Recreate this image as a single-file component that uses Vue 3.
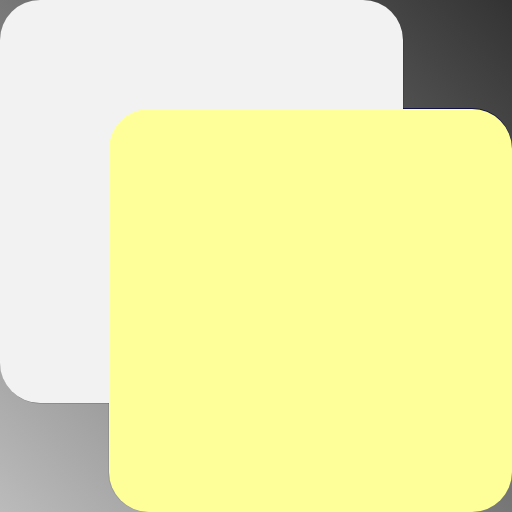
<template>
  <main class="page">
    <div class="note edge"></div>
    <div class="note back"></div>
    <div class="note front"></div>
  </main>
</template>

<script setup>
</script>

<style scoped>
.page {
  display: grid;
  width: 512px;
  height: 512px;
  overflow: hidden;
  background: linear-gradient(to top right, #bbbbbb 0%, #333333 100%);
}

.note {
  grid-area: 1 / 1;
  width: 403px;
  height: 403px;
  border-radius: 40px;
}

.back {
  background-color: #f2f2f2;
  box-shadow: 0.5px 0.5px 0.5px rgba(0, 0, 0, 0.3);
}

/* sits under the grey note so the dark line only shows against the backdrop */
.edge {
  margin: 109px 0 0 109px;
  box-shadow: 0 -1px 0 rgba(0, 0, 70, 0.75), -1px 0 0 rgba(0, 0, 0, 0.1);
}

.front {
  margin: 109px 0 0 109px;
  background-color: #ffff99;
}
</style>

<style>
html, body {
  margin: 0;
  background: #333333;
}
</style>
